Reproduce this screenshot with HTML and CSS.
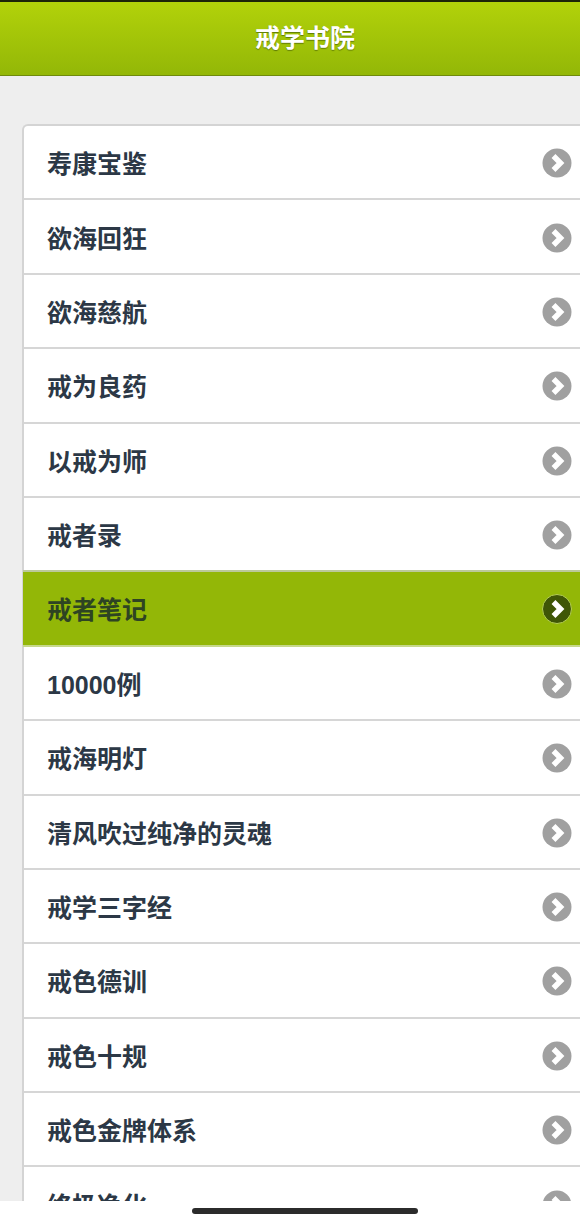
FILE: index.html
```html
<!DOCTYPE html>
<html lang="zh">
<head>
    <meta charset="UTF-8">
    <title>戒学书院</title>
    <link rel="stylesheet" href="styles.css">
</head>
<body>
    <svg width="0" height="0" class="defs">
        <symbol id="arrow" viewBox="0 0 30 30">
            <circle cx="15" cy="15" r="14.5"/>
            <path d="M11.5 8 L18.5 15 L11.5 22" fill="none" stroke="#fff" stroke-width="5.5"/>
        </symbol>
    </svg>
    <div class="page">
        <header class="header">戒学书院</header>
        <ul class="list">
            <li class="item"><span>寿康宝鉴</span><svg class="icon"><use href="#arrow"/></svg></li>
            <li class="item"><span>欲海回狂</span><svg class="icon"><use href="#arrow"/></svg></li>
            <li class="item"><span>欲海慈航</span><svg class="icon"><use href="#arrow"/></svg></li>
            <li class="item"><span>戒为良药</span><svg class="icon"><use href="#arrow"/></svg></li>
            <li class="item"><span>以戒为师</span><svg class="icon"><use href="#arrow"/></svg></li>
            <li class="item"><span>戒者录</span><svg class="icon"><use href="#arrow"/></svg></li>
            <li class="item active"><span>戒者笔记</span><svg class="icon"><use href="#arrow"/></svg></li>
            <li class="item"><span>10000例</span><svg class="icon"><use href="#arrow"/></svg></li>
            <li class="item"><span>戒海明灯</span><svg class="icon"><use href="#arrow"/></svg></li>
            <li class="item"><span>清风吹过纯净的灵魂</span><svg class="icon"><use href="#arrow"/></svg></li>
            <li class="item"><span>戒学三字经</span><svg class="icon"><use href="#arrow"/></svg></li>
            <li class="item"><span>戒色德训</span><svg class="icon"><use href="#arrow"/></svg></li>
            <li class="item"><span>戒色十规</span><svg class="icon"><use href="#arrow"/></svg></li>
            <li class="item"><span>戒色金牌体系</span><svg class="icon"><use href="#arrow"/></svg></li>
            <li class="item"><span>终极净化</span><svg class="icon"><use href="#arrow"/></svg></li>
        </ul>
    </div>
    <div class="home-bar"><div class="home-line"></div></div>
</body>
</html>
```

FILE: styles.css
```css
html, body { margin: 0; padding: 0; }
body {
    font-family: "Liberation Sans", "Noto Sans CJK SC", sans-serif;
    background: #eeeeee;
}
.defs { position: absolute; }
.page {
    height: 1223px;
    overflow: hidden;
}
.header {
    height: 73px;
    line-height: 73px;
    padding-left: 30px;
    border-top: 2px solid #1c2408;
    border-bottom: 1px solid #6f8a0c;
    background: linear-gradient(#b2d20a, #93b707);
    color: #fff;
    font-size: 25px;
    font-weight: bold;
    text-align: center;
    text-shadow: 0 1px 1px #5f7a05;
}
.list {
    list-style: none;
    margin: 48px 0 0 22px;
    padding: 0;
    border-top: 2px solid #d4d4d4;
    border-left: 2px solid #d4d4d4;
    border-top-left-radius: 6px;
    background: #fff;
}
.item {
    height: 72.4px;
    border-bottom: 2px solid #d6d6d6;
    padding-left: 23px;
    padding-right: 8px;
    display: flex;
    align-items: center;
    justify-content: space-between;
    color: #2c3846;
    font-size: 25px;
    font-weight: bold;
}
.icon {
    width: 30px;
    height: 30px;
    margin-top: 2px;
    fill: #a0a0a0;
}
.active {
    margin-left: -1px;
    margin-top: -2px;
    height: 74.4px;
    padding-left: 24px;
    background: #93b707;
    color: #2e4423;
    border-bottom: 2px solid #c6d88a;
    box-shadow: inset 0 2px 0 #bcc99a;
}
.active .icon {
    fill: #3f5606;
    stroke: #b5cf55;
    stroke-width: 1;
}
.home-bar {
    position: absolute;
    left: 0;
    right: 0;
    top: 1201px;
    height: 22px;
    background: #fff;
}
.home-line {
    width: 226px;
    height: 6px;
    margin: 7px auto 0 192px;
    border-radius: 3px;
    background: #2b2b2b;
}
```
